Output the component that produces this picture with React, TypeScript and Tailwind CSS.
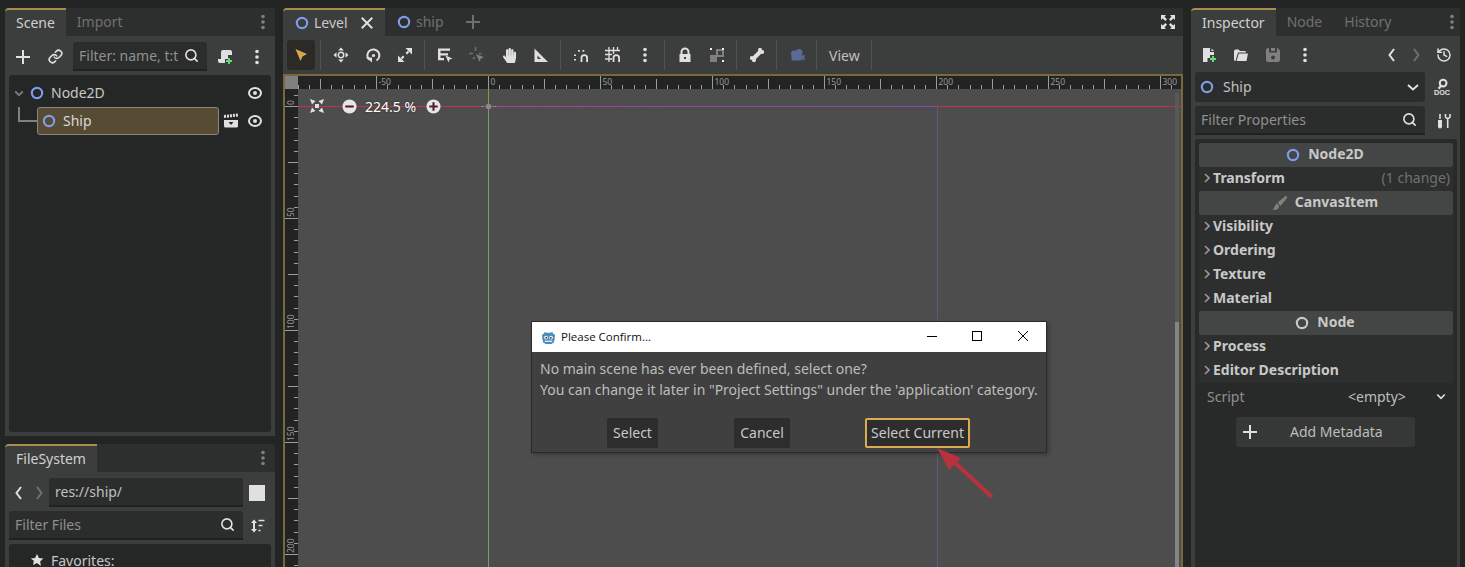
import React from "react";
import { History, Link, Search } from "lucide-react";
import { FaHandPaper } from "react-icons/fa";

const W = "#e0e0e0";

const Ico = ({ children, size = 16, className = "" }: { children?: React.ReactNode; size?: number; className?: string }) => (
  <svg width={size} height={size} viewBox="0 0 16 16" fill="none" className={`shrink-0 ${className}`}>
    {children}
  </svg>
);

const Ring = ({ color = "#7f9ce8" }: { color?: string }) => (
  <Ico size={14}>
    <circle cx="8" cy="8" r="5.900" stroke={color} strokeWidth="2.400" />
  </Ico>
);
const Dots = ({ color = W, size = 16 }: { color?: string; size?: number }) => (
  <Ico size={size}>
    <circle cx="8" cy="2.500" r="1.800" fill={color} />
    <circle cx="8" cy="8" r="1.800" fill={color} />
    <circle cx="8" cy="13.500" r="1.800" fill={color} />
  </Ico>
);
const PlusI = ({ color = W }: { color?: string }) => (
  <Ico>
    <path d="M8 1v14M1 8h14" stroke={color} strokeWidth="2" />
  </Ico>
);
const Eye = () => (
  <Ico>
    <ellipse cx="8" cy="8" rx="6" ry="5" stroke={W} strokeWidth="2" />
    <circle cx="8" cy="8" r="2" fill={W} />
  </Ico>
);
const Mag = () => <Search size={15} strokeWidth={2.6} color={W} className="shrink-0" />;
const Chev = ({ dir, color = W }: { dir: "l" | "r" | "d"; color?: string }) => (
  <Ico>
    <path
      d={dir === "l" ? "M10 2 5.500 8 10 14" : dir === "r" ? "M6 2 10.500 8 6 14" : "M3 6l5 4.500L13 6"}
      stroke={color}
      strokeWidth="2"
    />
  </Ico>
);
const SmallChev = ({ color = "#9a9a9a" }: { color?: string }) => (
  <svg width="6" height="10" viewBox="0 0 6 10" fill="none" className="shrink-0">
    <path d="M1 1l4 4-4 4" stroke={color} strokeWidth="1.600" />
  </svg>
);
const GreenPlus = ({ x = 12, y = 12 }: { x?: number; y?: number }) => (
  <path d={`M${x} ${y - 3}v6M${x - 3} ${y}h6`} stroke="#5fdc7a" strokeWidth="2" />
);

const ScriptAdd = () => (
  <Ico>
    <path d="M6 1h7a2 2 0 0 1 2 2v3h-4v4H8v4H3a2 2 0 0 1-2-2v-2h3V3a2 2 0 0 1 2-2z" fill={W} />
    <GreenPlus x={12} y={12} />
  </Ico>
);
const Clapper = () => (
  <Ico>
    <path d="M1 3.500 15 2" stroke={W} strokeWidth="3" strokeDasharray="2 1" />
    <path d="M1 7h14v6a1.500 1.500 0 0 1-1.500 1.500h-11A1.500 1.500 0 0 1 1 13z" fill={W} />
    <path d="M5.500 9h5L8 12z" fill="#252726" />
  </Ico>
);
const Select = () => (
  <Ico>
    <path d="M2.500 2 14 7l-4.500 2.500L7.500 14z" fill="#d9a84e" />
  </Ico>
);
const Move = () => (
  <Ico>
    <path d="M8 .5l2.800 3H5.200zM8 15.500l-2.800-3h5.600zM.5 8l3-2.800v5.600zM15.500 8l-3 2.800V5.200z" fill={W} />
    <circle cx="8" cy="8" r="2.700" stroke={W} strokeWidth="1.500" />
  </Ico>
);
const Rotate = () => (
  <Ico>
    <path d="M11.500 13.500A6 6 0 1 0 4 12.500" stroke={W} strokeWidth="2" />
    <path d="M1 10.500h6v5z" fill={W} />
    <circle cx="8.500" cy="8.500" r="1.600" fill={W} />
  </Ico>
);
const Scale = () => (
  <Ico>
    <path d="M8.500 1h6.500v6.500zM7.500 15H1V8.500z" fill={W} />
    <path d="M4.500 11.500l2.200-2.200M9.300 6.700l2.200-2.200" stroke={W} strokeWidth="2.200" />
  </Ico>
);
const ListSelect = () => (
  <Ico>
    <path d="M1 1.500h12v2.200H3.500v2.500H11v2.200H3.500v2.600H7v2.200H1z" fill={W} />
    <path d="M8.500 8.500l7 3-3 1-1 3z" fill={W} />
  </Ico>
);
const DimSelect = () => (
  <Ico>
    <path d="M6.500 0v4M0 6.500h4" stroke="#6e6e6e" strokeWidth="1.600" />
    <path d="M7 7l8 3.200-3.200 1.200-1.200 3.600z" fill="#7f7f7f" />
    <path d="M10 6.500h2.500M4 12l2-2" stroke="#6e6e6e" strokeWidth="1.600" />
  </Ico>
);
const Ruler = () => (
  <Ico>
    <path fillRule="evenodd" clipRule="evenodd" d="M1.500 1.500 15 15H1.500zM4.500 8.500V12h3.500z" fill={W} />
  </Ico>
);
const Snap = () => (
  <Ico>
    <path d="M8.500 15v-4a2.800 2.800 0 0 1 5.600 0v4" stroke={W} strokeWidth="1.800" />
    <path d="M1 7.500h2v1.600H1zM1 12h2v1.600H1zM5 3h1.800v1.800H5zM9.500 3h1.800v1.800H9.500z" fill={W} />
  </Ico>
);
const GridSnap = () => (
  <Ico>
    <path d="M8.500 15v-4a2.800 2.800 0 0 1 5.600 0v4" stroke={W} strokeWidth="1.800" />
    <path d="M4 0v15M8.500 0v7M12.500 0v4M0 3.500h15M0 7.500h7M0 12h7" stroke={W} strokeWidth="1.300" />
  </Ico>
);
const Lock = () => (
  <Ico>
    <path d="M4.500 7.500V5a3.500 3.500 0 0 1 7 0v2.500" stroke={W} strokeWidth="2" />
    <path fillRule="evenodd" clipRule="evenodd" d="M2.500 7h11v8h-11zM7 10v2h2v-2z" fill={W} />
  </Ico>
);
const Group = () => (
  <Ico>
    <path d="M1 8h7v7H1z" fill="#808080" />
    <path d="M8 3h6v6H8z" stroke="#808080" strokeWidth="2" />
    <path d="M1 1h2v2H1zM13 1h2v2h-2zM13 13h2v2h-2z" fill="#f0f0f0" />
  </Ico>
);
const Bone = () => (
  <Ico>
    <path d="M4.500 11.500l7-7" stroke={W} strokeWidth="4" />
    <circle cx="11" cy="2.800" r="2" fill={W} />
    <circle cx="13.200" cy="5" r="2" fill={W} />
    <circle cx="2.800" cy="11" r="2" fill={W} />
    <circle cx="5" cy="13.200" r="2" fill={W} />
  </Ico>
);
const Camera = () => (
  <Ico>
    <circle cx="5" cy="6.500" r="3" fill="#5a6a94" />
    <circle cx="10" cy="5.500" r="3.500" fill="#5a6a94" />
    <path d="M2.500 7h10v6.500h-10zM12.500 9l3-1.500v6l-3-1.500z" fill="#5a6a94" />
  </Ico>
);
const Fullscreen = () => (
  <Ico>
    <path
      d="M1 1h5L4.500 2.800 7 5.300 5.300 7 2.800 4.500 1 6zM15 1v5l-1.800-1.500L10.700 7 9 5.300l2.500-2.500L10 1zM1 15v-5l1.800 1.500L5.300 9 7 10.700l-2.500 2.500L6 15zM15 15h-5l1.500-1.800L9 10.700 10.700 9l2.500 2.500L15 10z"
      fill={W}
    />
  </Ico>
);
const NewDoc = () => (
  <Ico>
    <path d="M2 1h7v4h4v3H9v3H6.500v4H2z" fill={W} />
    <path d="M10.500 1.500l2.500 2.500h-2.500z" fill={W} />
    <GreenPlus x={12} y={12} />
  </Ico>
);
const Folder = () => (
  <Ico>
    <path d="M2.500 14a1.500 1.500 0 0 1-1.500-1.500V3.500L2.500 2.500h3L7 4h5.500l.5 1.500H5L2.500 14z" fill={W} />
    <path d="M5.800 6.500H15l-1.500 7.500H3.500z" fill={W} />
  </Ico>
);
const Save = () => (
  <Ico>
    <path fillRule="evenodd" clipRule="evenodd" d="M1 2.500 2.500 1H4v4.500h8V1h.5L15 3.500v10L13.500 15h-11L1 13.500zM8 8.500a2 2 0 1 0 0 4 2 2 0 0 0 0-4zM6 1h4v3H6z" fill="#808080" />
  </Ico>
);
const DocHelp = () => (
  <Ico size={18}>
    <circle cx="9" cy="4.500" r="3" stroke={W} strokeWidth="1.800" />
    <path d="M7 7l-2 2.500" stroke={W} strokeWidth="2" />
    <text x="8" y="15.500" textAnchor="middle" fontSize="6.500" fontWeight="700" fill={W} fontFamily="'Liberation Sans', sans-serif">DOC</text>
  </Ico>
);
const Tools = () => (
  <Ico>
    <path d="M4 1v5" stroke={W} strokeWidth="1.600" />
    <path d="M2 7h4v6.500a2 2 0 0 1-4 0z" fill={W} />
    <path d="M9.500 1v3a2.500 2.500 0 0 0 4.500 0V1M11.700 6v9" stroke={W} strokeWidth="1.600" />
  </Ico>
);
const Sort = () => (
  <Ico>
    <path d="M5 1.500 8 5H2zM5 14.500 2 11h6z" fill={W} />
    <path d="M5 4v8" stroke={W} strokeWidth="2" />
    <path d="M9.500 2.500h6M9.500 7.500h4M9.500 12.500h2" stroke={W} strokeWidth="1.600" />
  </Ico>
);
const Star = () => (
  <Ico size={14}>
    <path d="M8 1l2.200 4.600 5 .7-3.600 3.500.9 5L8 11.400l-4.500 2.400.9-5L.8 6.300l5-.7z" fill={W} />
  </Ico>
);
const Brush = () => (
  <Ico size={15}>
    <path d="M15 .5 7 7l2 2.500L15.500 1.500z" fill="#808080" stroke="#808080" strokeWidth="1.500" />
    <path d="M5.500 8C2.500 9 3.500 13 .5 14.500c3.500 1 7.500 0 7-4z" fill="#808080" />
  </Ico>
);
const CenterIcon = () => (
  <Ico>
    <path d="M1 1l5.500 2L3 6.500zM15 1 9.500 3 13 6.500zM1 15l5.500-2L3 9.500zM15 15 9.500 13 13 9.500z" fill={W} />
    <rect x="6" y="6" width="4" height="4" fill={W} />
  </Ico>
);
const RoundBtn = ({ plus }: { plus?: boolean }) => (
  <Ico size={15}>
    <circle cx="8" cy="8" r="7.500" fill="#e6e6e6" />
    <path d={plus ? "M3.500 8h9M8 3.500v9" : "M3.500 8h9"} stroke="#501c2a" strokeWidth="2.200" />
  </Ico>
);
const GodotLogo = () => (
  <svg width="15" height="15" viewBox="0 0 16 16" className="shrink-0">
    <path d="M1 5l2-1 1-2 2 1h4l2-1 1 2 2 1-.5 4 .5 1-1 .5V13l-3 2H5l-3-2v-2.500L1 10l.5-1z" fill="#478cbf" />
    <circle cx="5.300" cy="8" r="2" fill="#fff" />
    <circle cx="10.700" cy="8" r="2" fill="#fff" />
    <circle cx="5.500" cy="8.200" r="1" fill="#414042" />
    <circle cx="10.500" cy="8.200" r="1" fill="#414042" />
    <path d="M4 12h8" stroke="#fff" strokeWidth="1.200" />
  </svg>
);

const Slot = ({ children, w = "w-8" }: { children?: React.ReactNode; w?: string }) => (
  <div className={`${w} h-[30px] flex items-center justify-center shrink-0`}>{children}</div>
);
const Sep = () => <div className="w-px h-[30px] bg-[#505251] ml-[3px] mr-1 shrink-0" />;

const Tab = ({ label, active }: { label: string; active?: boolean }) => (
  <div
    className={
      active
        ? "h-full px-[11px] pb-[2px] flex items-center bg-[#3c3e3d] border-t-2 border-[#a98d4f] text-[#d0d0d0] rounded-tl"
        : "h-full px-[11px] pb-[2px] flex items-center text-[#6f716f]"
    }
  >
    {label}
  </div>
);

const Input = ({ text, right, color = "#8f908f", className = "" }: { text: string; right?: React.ReactNode; color?: string; className?: string }) => (
  <div className={`h-[29px] flex items-center justify-between pl-[6px] pr-2 bg-[#2b2d2c] border-b-2 border-[#202221] rounded-t-[3px] ${className}`}>
    <span style={{ color }} className="whitespace-nowrap overflow-hidden">{text}</span>
    {right}
  </div>
);

const SectionHead = ({ icon, label }: { icon: React.ReactNode; label: string }) => (
  <div className="h-6 flex items-center justify-center gap-2 bg-[#444645] rounded-[3px] font-bold text-[#c8c8c8] pr-[2px]">
    {icon}
    <span className="pb-[4px]">{label}</span>
  </div>
);
const PropRow = ({ label, right }: { label: string; right?: string }) => (
  <div className="h-6 flex items-center pl-[5px] pr-[3px] pb-[3px] gap-[3px]">
    <SmallChev />
    <span className="font-bold text-[#c8c8c8]">{label}</span>
    {right && <span className="ml-auto text-[#6f716f]">{right}</span>}
  </div>
);

const majors = [-50, 0, 50, 100, 150, 200, 250, 300];
const ticks = Array.from({ length: 90 }, (_, i) => i - 20);

const TopRuler = () => {
  const origin = 190.5;
  return (
    <svg className="flex-1 h-[13px] block" height="13" viewBox="0 0 883 13" preserveAspectRatio="xMinYMin">
      {ticks.map((t) => {
        const x = Math.round(origin + t * 11.2 - 0.5) + 0.5;
        const y = t % 10 === 0 ? 0 : t % 5 === 0 ? 3 : 9;
        return <line key={t} x1={x} x2={x} y1={y} y2={13} stroke="#9c9c9c" shapeRendering="crispEdges" />;
      })}
      {majors.map((m) => (
        <text key={m} x={origin + m * 2.24 + 2} y={9} fontSize="8.500" fill="#999" fontFamily="'Noto Sans', sans-serif">
          {m}
        </text>
      ))}
    </svg>
  );
};
const LeftRuler = () => {
  const origin = 17.5;
  return (
    <svg className="w-[13px] h-full block shrink-0" width="13" viewBox="0 0 13 478" preserveAspectRatio="xMinYMin">
      {ticks.map((t) => {
        const y = Math.round(origin + t * 11.2 - 0.5) + 0.5;
        const x = t % 10 === 0 ? 0 : t % 5 === 0 ? 3 : 9;
        return <line key={t} x1={x} x2={13} y1={y} y2={y} stroke="#9c9c9c" shapeRendering="crispEdges" />;
      })}
      {[0, 50, 100, 150, 200].map((m) => {
        const y = origin + m * 2.24 - 1.5;
        return (
          <text key={m} x={0} y={0} transform={`translate(9 ${y}) rotate(-90)`} fontSize="8.500" fill="#999" fontFamily="'Noto Sans', sans-serif">
            {m}
          </text>
        );
      })}
    </svg>
  );
};

const Viewport = () => (
  <div className="relative flex-1 bg-[#4d4d4d] overflow-hidden">
    <svg className="absolute inset-0" width="883" height="478">
      <defs>
        <linearGradient id="axis" x1="0" x2="1" y1="0" y2="0">
          <stop offset="0" stopColor="#a8409a" />
          <stop offset="1" stopColor="#7d50a8" />
        </linearGradient>
      </defs>
      <rect x="0" y="17" width="190" height="1" fill="#c8304a" />
      <rect x="190" y="17" width="449" height="1" fill="url(#axis)" />
      <rect x="639" y="17" width="244" height="1" fill="#c8304a" />
      <rect x="190" y="0" width="1" height="17" fill="#74aa1c" />
      <rect x="190" y="18" width="1" height="460" fill="#729f72" />
      <rect x="639" y="18" width="1" height="460" fill="#5c5a8c" />
      <circle cx="190.500" cy="17.500" r="2.800" fill="#8a8a7e" />
      <path d="M183 17.500h3M195 17.500h3M190.500 11v3M190.500 21v3" stroke="#8a8a8a" />
      <rect x="877" y="4" width="4" height="474" fill="#585858" />
      <rect x="877" y="233" width="4" height="245" fill="#858585" />
    </svg>
    <div className="absolute left-[11px] top-[9px] flex items-center h-4 text-white">
      <CenterIcon />
      <div className="ml-[17px]"><RoundBtn /></div>
      <span className="ml-[8px] w-[52px] whitespace-nowrap [text-shadow:0_0_2px_#222]">224.5 %</span>
      <div className="ml-[9px]"><RoundBtn plus /></div>
    </div>
  </div>
);

const DialogBtn = ({ label, w, focus }: { label: string; w: string; focus?: boolean }) => (
  <div
    className={`${w} h-[30px] flex items-center justify-center pb-[2px] bg-[#2c2d2c] rounded-[2px] text-[#c8c8c8] whitespace-nowrap ${
      focus ? "border-2 border-[#dcaa50]" : ""
    }`}
  >
    {label}
  </div>
);

const Dialog = () => (
  <div className="absolute left-[531px] top-[321px] w-[516px] h-[132px] border border-[#2a2a2a] bg-[#3f403f] shadow-[2px_2px_4px_rgba(0,0,0,0.25)] flex flex-col">
    <div className="h-[30px] bg-white flex items-center pl-[9px] shrink-0">
      <GodotLogo />
      <span className="ml-[5px] text-[11.5px] text-[#111] font-['Open_Sans',sans-serif]">Please Confirm...</span>
      <div className="ml-auto flex items-center pb-[2px]">
        <div className="w-[45px] flex justify-center"><div className="w-[10px] h-px bg-black" /></div>
        <div className="w-[46px] flex justify-center"><div className="w-[10px] h-[10px] border border-black" /></div>
        <div className="w-[46px] flex justify-center">
          <svg width="10" height="10" viewBox="0 0 10 10"><path d="M0 0l10 10M10 0L0 10" stroke="#000" /></svg>
        </div>
      </div>
    </div>
    <div className="px-2 pt-[6px] text-[#bdbdbd] leading-[21px] whitespace-nowrap">
      <div>No main scene has ever been defined, select one?</div>
      <div>You can change it later in "Project Settings" under the 'application' category.</div>
    </div>
    <div className="mt-auto mb-1 pl-[75px] flex gap-[76px]">
      <DialogBtn label="Select" w="w-[51px]" />
      <DialogBtn label="Cancel" w="w-[56px]" />
      <div className="-ml-px"><DialogBtn label="Select Current" w="w-[105px]" focus /></div>
    </div>
  </div>
);

const Arrow = () => (
  <svg className="absolute left-[930px] top-[440px]" width="70" height="65" viewBox="930 440 70 65">
    <path d="M992 497 953 461" stroke="#b8323e" strokeWidth="4" />
    <path d="M937 448 961 458 949 470z" fill="#b8323e" />
  </svg>
);

export default function App() {
  return (
    <div className="relative w-[1465px] h-[567px] overflow-hidden bg-[#232524] pt-2 pl-[5px] flex gap-2 text-[14px] font-['Noto_Sans',sans-serif] text-[#c8c8c8]">
      {/* Left dock */}
      <div className="w-[270px] flex flex-col gap-2 shrink-0 h-[559px]">
        <div className="h-[428px] bg-[#3c3e3d] rounded-t flex flex-col shrink-0">
          <div className="h-7 bg-[#2d2f2e] flex items-center rounded-t shrink-0 pr-1">
            <Tab label="Scene" active />
            <Tab label="Import" />
            <div className="ml-auto"><Dots color="#808080" /></div>
          </div>
          <div className="h-[29px] mt-[6px] flex items-center shrink-0">
            <div className="w-9 flex justify-center"><PlusI /></div>
            <div className="w-8 flex justify-center pr-1"><Link size={15} strokeWidth={2.5} color={W} /></div>
            <Input text="Filter: name, t:t" className="w-[134px]" right={<Mag />} />
            <div className="w-9 flex justify-center"><ScriptAdd /></div>
            <div className="ml-[6px]"><Dots /></div>
          </div>
          <div className="flex-1 mt-1 mx-1 mb-1 bg-[#252726] rounded-[3px] pt-1 relative">
            <div className="h-7 flex items-center pl-1">
              <Ico size={12}><path d="M3 6l5 5 5-5" stroke="#7a7a7a" strokeWidth="2.500" /></Ico>
              <div className="ml-[5px]"><Ring /></div>
              <span className="ml-[7px] pb-[2px]">Node2D</span>
              <div className="ml-auto mr-2"><Eye /></div>
            </div>
            <div className="h-7 flex items-center relative">
              <div className="absolute left-[9px] top-0 w-[19px] h-[15px] border-l-2 border-b-2 border-[#808080]" />
              <div className="ml-7 w-[182px] h-7 bg-[#574b33] border border-[#8a887e] rounded-[3px] flex items-center pl-1 text-[#d8d8d8] shrink-0">
                <Ring />
                <span className="ml-[7px] pb-[2px]">Ship</span>
              </div>
              <div className="ml-1"><Clapper /></div>
              <div className="ml-2"><Eye /></div>
            </div>
          </div>
        </div>
        <div className="flex-1 bg-[#3c3e3d] rounded-t flex flex-col min-h-0">
          <div className="h-7 bg-[#2d2f2e] flex items-center rounded-t shrink-0 pr-1">
            <Tab label="FileSystem" active />
            <div className="ml-auto"><Dots color="#808080" /></div>
          </div>
          <div className="h-[29px] mt-[6px] flex items-center shrink-0">
            <div className="w-6 ml-[2px] flex justify-center -mr-[1px]"><Chev dir="l" /></div>
            <div className="w-[18px] flex justify-center"><Chev dir="r" color="#6f716f" /></div>
            <Input text="res://ship/" color="#c0c0c0" className="w-[194px] ml-px" />
            <div className="ml-[6px] w-4 h-4 bg-[#e0e0e0]" />
          </div>
          <div className="h-[29px] mt-1 ml-1 flex items-center shrink-0">
            <Input text="Filter Files" className="w-[234px]" right={<Mag />} />
            <div className="ml-[6px]"><Sort /></div>
          </div>
          <div className="flex-1 mt-1 mx-1 bg-[#252726] rounded-t-[3px] pt-[9px] pl-[21px] flex gap-[7px] items-start">
            <Star />
            <span className="leading-[18px] -mt-[1px]">Favorites:</span>
          </div>
        </div>
      </div>

      {/* Center */}
      <div className="w-[900px] h-[559px] shrink-0 flex flex-col bg-[#3c3e3d] rounded-t">
        <div className="h-7 bg-[#2d2f2e] flex items-center rounded-t shrink-0">
          <div className="w-[102px] h-full bg-[#3c3e3d] border-t-2 border-[#a98d4f] rounded-tl flex items-center pl-3">
            <Ring />
            <span className="ml-[5px] pb-[2px] text-[#c8c8c8]">Level</span>
            <Ico size={14} className="ml-[12px]"><path d="M2 2l12 12M14 2 2 14" stroke={W} strokeWidth="2.200" /></Ico>
          </div>
          <div className="ml-3"><Ring /></div>
          <span className="ml-[5px] pb-[2px] text-[#6f716f]">ship</span>
          <div className="ml-[21px]"><PlusI color="#6f716f" /></div>
          <div className="ml-auto mr-[7px]"><Fullscreen /></div>
        </div>
        <div className="h-[38px] flex items-center pl-1 shrink-0">
          <div className="w-7 h-[30px] mr-[2px] bg-[#2b2a26] rounded-[3px] flex items-center justify-center shrink-0"><Select /></div>
          <Sep />
          <Slot><Move /></Slot>
          <Slot><Rotate /></Slot>
          <Slot><Scale /></Slot>
          <Sep />
          <Slot><ListSelect /></Slot>
          <Slot><DimSelect /></Slot>
          <Slot><FaHandPaper size={15} color={W} /></Slot>
          <Slot><Ruler /></Slot>
          <Sep />
          <Slot><Snap /></Slot>
          <Slot><GridSnap /></Slot>
          <Slot><Dots /></Slot>
          <Sep />
          <Slot><Lock /></Slot>
          <Slot><Group /></Slot>
          <Sep />
          <Slot><Bone /></Slot>
          <Sep />
          <Slot><Camera /></Slot>
          <Sep />
          <div className="px-2 text-[#c0c0c0] shrink-0">View</div>
          <Sep />
        </div>
        <div className="flex-1 min-h-0 border-x-2 border-t-2 border-[#7a673c] flex flex-col">
          <div className="h-[13px] flex shrink-0 bg-[#222423]">
            <div className="w-[13px] h-[13px] bg-[#808080] shrink-0" />
            <TopRuler />
          </div>
          <div className="flex-1 min-h-0 flex bg-[#222423]">
            <LeftRuler />
            <Viewport />
          </div>
        </div>
      </div>

      {/* Right dock */}
      <div className="w-[269px] h-[559px] shrink-0 bg-[#3c3e3d] rounded-t flex flex-col">
        <div className="h-7 bg-[#2d2f2e] flex items-center rounded-t shrink-0">
          <Tab label="Inspector" active />
          <Tab label="Node" />
          <Tab label="History" />
          <div className="ml-auto"><Dots color="#808080" /></div>
        </div>
        <div className="h-[30px] mt-1 flex items-center pl-[2px] shrink-0">
          <Slot><NewDoc /></Slot>
          <Slot><Folder /></Slot>
          <Slot><Save /></Slot>
          <Slot><Dots /></Slot>
          <div className="ml-auto flex items-center">
            <Slot w="w-6"><Chev dir="l" /></Slot>
            <Slot w="w-6"><Chev dir="r" color="#6f716f" /></Slot>
            <Slot><History size={16} strokeWidth={2.2} color={W} /></Slot>
          </div>
        </div>
        <div className="h-[30px] mt-[2px] ml-1 flex items-center shrink-0">
          <div className="w-[230px] h-full bg-[#2b2d2c] rounded-[3px] flex items-center pl-[5px] pr-1">
            <Ring />
            <span className="ml-[9px] pb-[2px] text-[#c0c0c0]">Ship</span>
            <div className="ml-auto"><Chev dir="d" /></div>
          </div>
          <div className="ml-2"><DocHelp /></div>
        </div>
        <div className="h-[29px] mt-1 ml-1 flex items-center shrink-0">
          <Input text="Filter Properties" className="w-[230px]" right={<Mag />} />
          <div className="ml-[11px]"><Tools /></div>
        </div>
        <div className="flex-1 mt-1 ml-1 mr-[3px] bg-[#282a29] rounded-t-[3px] p-1 min-h-0">
          <div className="bg-[#2d2f2e] rounded-[3px]">
            <SectionHead icon={<Ring />} label="Node2D" />
            <PropRow label="Transform" right="(1 change)" />
            <SectionHead icon={<Brush />} label="CanvasItem" />
            <PropRow label="Visibility" />
            <PropRow label="Ordering" />
            <PropRow label="Texture" />
            <PropRow label="Material" />
            <SectionHead icon={<Ring color="#c8c8c8" />} label="Node" />
            <PropRow label="Process" />
            <PropRow label="Editor Description" />
          </div>
          <div className="h-7 flex items-center pl-2 pr-[6px] pb-[2px]">
            <span className="text-[#8f908f] w-[141px]">Script</span>
            <span className="text-[#bdbdbd]">&lt;empty&gt;</span>
            <Ico size={12} className="ml-auto"><path d="M3 6l5 5 5-5" stroke={W} strokeWidth="2.200" /></Ico>
          </div>
          <div className="w-[179px] h-[30px] mt-[6px] ml-[37px] bg-[#363837] rounded-[3px] flex items-center pl-[6px] text-[#bdbdbd]">
            <PlusI />
            <span className="ml-[32px] pb-[2px]">Add Metadata</span>
          </div>
        </div>
      </div>

      <Dialog />
      <Arrow />
    </div>
  );
}
